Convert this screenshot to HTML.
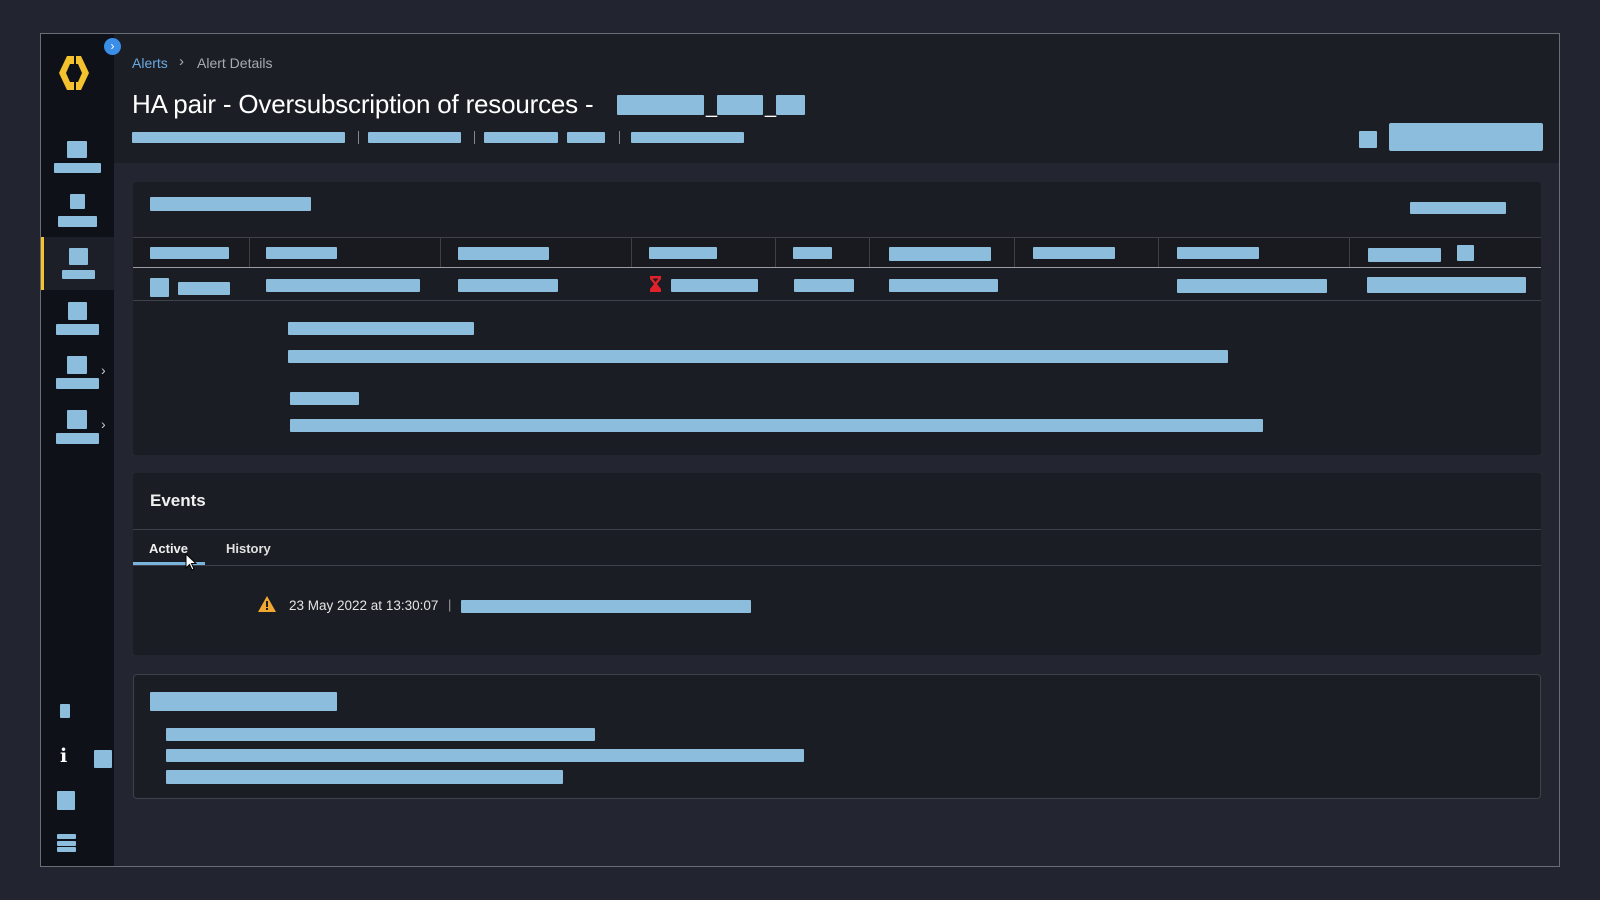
<!DOCTYPE html>
<html><head><meta charset="utf-8"><style>
*{margin:0;padding:0;box-sizing:border-box}
body{width:1600px;height:900px;background:#22252f;font-family:"Liberation Sans",sans-serif;position:relative;overflow:hidden;color:#e8eaee}
.a{position:absolute}
.b{position:absolute;background:#8cbddd;border-radius:1px}
.frame{left:40px;top:33px;width:1520px;height:834px;border:1px solid #6a6d75;background:#232631}
.side{left:41px;top:34px;width:73px;height:832px;background:#0e1218}
.hdr{left:114px;top:34px;width:1445px;height:129px;background:#1b1e25}
.card{background:#1b1d24;border-radius:3px}
.vl{position:absolute;width:1px;background:#3d4048}
.hl{position:absolute;height:1px;background:#3d4048}
</style></head><body>
<div class="a frame"></div>
<div class="a side"></div>
<div class="a" style="left:41px;top:237px;width:73px;height:53px;background:#1c1f27"></div>
<div class="a" style="left:41px;top:237px;width:3px;height:53px;background:#f3c22e"></div>
<div class="a hdr"></div>
<!-- logo -->
<svg class="a" style="left:58px;top:55px" width="32" height="36" viewBox="0 0 32 36"><path d="M9 1 L16 1 L16 9 L12 9 L8 18 L12 27 L16 27 L16 35 L9 35 L1 18 Z" fill="#f3c22e"/><path d="M18 1 L23 1 L31 18 L23 35 L18 35 L18 27 L20 27 L24 18 L20 9 L18 9 Z" fill="#f3c22e"/></svg>
<div class="a" style="left:104px;top:38px;width:17px;height:17px;border-radius:50%;background:#3a8ee8;color:#fff;font-size:12px;line-height:16px;text-align:center">›</div>
<!-- sidebar icons -->
<div class="b" style="left:67px;top:141px;width:20px;height:17px"></div><div class="b" style="left:54px;top:163px;width:47px;height:10px"></div>
<div class="b" style="left:70px;top:194px;width:15px;height:15px"></div><div class="b" style="left:58px;top:216px;width:39px;height:11px"></div>
<div class="b" style="left:69px;top:248px;width:19px;height:17px"></div><div class="b" style="left:62px;top:270px;width:33px;height:9px"></div>
<div class="b" style="left:68px;top:302px;width:19px;height:18px"></div><div class="b" style="left:56px;top:324px;width:43px;height:11px"></div>
<div class="b" style="left:67px;top:356px;width:20px;height:18px"></div><div class="b" style="left:56px;top:378px;width:43px;height:11px"></div>
<div class="a" style="left:101px;top:362px;font-size:14px;color:#ccc">›</div>
<div class="b" style="left:67px;top:410px;width:20px;height:19px"></div><div class="b" style="left:56px;top:433px;width:43px;height:11px"></div>
<div class="a" style="left:101px;top:416px;font-size:14px;color:#ccc">›</div>
<div class="b" style="left:60px;top:704px;width:10px;height:14px"></div>
<div class="a" style="left:60px;top:745px;font-size:19px;font-weight:bold;color:#fff;font-family:'DejaVu Serif',serif">i</div>
<div class="b" style="left:94px;top:750px;width:18px;height:18px"></div>
<div class="b" style="left:57px;top:791px;width:18px;height:19px"></div>
<div class="b" style="left:57px;top:834px;width:19px;height:5px"></div><div class="b" style="left:57px;top:841px;width:19px;height:5px"></div><div class="b" style="left:57px;top:847px;width:19px;height:5px"></div>
<!-- header -->
<div class="a" style="left:132px;top:55px;font-size:14px;color:#6aa9e0">Alerts</div>
<div class="a" style="left:179px;top:53px;font-size:15px;color:#aaa">›</div>
<div class="a" style="left:197px;top:55px;font-size:14px;color:#a8abb2">Alert Details</div>
<div class="a" style="left:132px;top:89px;font-size:26px;color:#fff;letter-spacing:-0.2px">HA pair - Oversubscription of resources -</div>
<div class="b" style="left:617px;top:95px;width:87px;height:20px"></div>
<div class="a" style="left:706px;top:96px;font-size:20px;color:#fff">_</div>
<div class="b" style="left:717px;top:95px;width:46px;height:20px"></div>
<div class="a" style="left:765px;top:96px;font-size:20px;color:#fff">_</div>
<div class="b" style="left:776px;top:95px;width:29px;height:20px"></div>
<div class="b" style="left:132px;top:132px;width:213px;height:11px"></div>
<div class="b" style="left:368px;top:132px;width:93px;height:11px"></div>
<div class="b" style="left:484px;top:132px;width:74px;height:11px"></div>
<div class="b" style="left:567px;top:132px;width:38px;height:11px"></div>
<div class="b" style="left:631px;top:132px;width:113px;height:11px"></div>
<div class="vl" style="left:358px;top:131px;height:13px;background:#888"></div>
<div class="vl" style="left:474px;top:131px;height:13px;background:#888"></div>
<div class="vl" style="left:619px;top:131px;height:13px;background:#888"></div>
<div class="b" style="left:1359px;top:131px;width:18px;height:17px"></div>
<div class="b" style="left:1389px;top:123px;width:154px;height:28px;border-radius:2px"></div>
<!-- card 1 -->
<div class="a card" style="left:133px;top:182px;width:1408px;height:273px"></div>
<div class="b" style="left:150px;top:197px;width:161px;height:14px"></div>
<div class="b" style="left:1410px;top:202px;width:96px;height:12px"></div>
<div class="hl" style="left:133px;top:237px;width:1408px;background:#3f424a"></div>
<div class="a" style="left:133px;top:238px;width:1408px;height:29px;background:#181a20"></div>
<div class="hl" style="left:133px;top:267px;width:1408px;background:#9a9ca2"></div>
<div class="hl" style="left:133px;top:300px;width:1408px;background:#3f424a"></div>
<div class="vl" style="left:249px;top:238px;height:29px"></div>
<div class="vl" style="left:440px;top:238px;height:29px"></div>
<div class="vl" style="left:631px;top:238px;height:29px"></div>
<div class="vl" style="left:775px;top:238px;height:29px"></div>
<div class="vl" style="left:869px;top:238px;height:29px"></div>
<div class="vl" style="left:1014px;top:238px;height:29px"></div>
<div class="vl" style="left:1158px;top:238px;height:29px"></div>
<div class="vl" style="left:1349px;top:238px;height:29px"></div>
<div class="b" style="left:150px;top:247px;width:79px;height:12px"></div>
<div class="b" style="left:266px;top:247px;width:71px;height:12px"></div>
<div class="b" style="left:458px;top:247px;width:91px;height:13px"></div>
<div class="b" style="left:649px;top:247px;width:68px;height:12px"></div>
<div class="b" style="left:793px;top:247px;width:39px;height:12px"></div>
<div class="b" style="left:889px;top:247px;width:102px;height:14px"></div>
<div class="b" style="left:1033px;top:247px;width:82px;height:12px"></div>
<div class="b" style="left:1177px;top:247px;width:82px;height:12px"></div>
<div class="b" style="left:1368px;top:248px;width:73px;height:14px"></div>
<div class="b" style="left:1457px;top:245px;width:17px;height:16px"></div>
<div class="b" style="left:150px;top:278px;width:19px;height:19px"></div>
<div class="b" style="left:178px;top:282px;width:52px;height:13px"></div>
<div class="b" style="left:266px;top:279px;width:154px;height:13px"></div>
<div class="b" style="left:458px;top:279px;width:100px;height:13px"></div>
<svg class="a" style="left:649px;top:276px" width="13" height="16" viewBox="0 0 13 16"><path d="M1 0H12V3L8 8L12 13V16H1V13L5 8L1 3Z" fill="#e0202a"/><path d="M3.5 2.5H9.5L6.5 6Z" fill="#1b1d24"/></svg>
<div class="b" style="left:671px;top:279px;width:87px;height:13px"></div>
<div class="b" style="left:794px;top:279px;width:60px;height:13px"></div>
<div class="b" style="left:889px;top:279px;width:109px;height:13px"></div>
<div class="b" style="left:1177px;top:279px;width:150px;height:14px"></div>
<div class="b" style="left:1367px;top:277px;width:159px;height:16px"></div>
<div class="b" style="left:288px;top:322px;width:186px;height:13px"></div>
<div class="b" style="left:288px;top:350px;width:940px;height:13px"></div>
<div class="b" style="left:290px;top:392px;width:69px;height:13px"></div>
<div class="b" style="left:290px;top:419px;width:973px;height:13px"></div>
<!-- events -->
<div class="a card" style="left:133px;top:473px;width:1408px;height:182px"></div>
<div class="a" style="left:150px;top:491px;font-size:17px;font-weight:bold;color:#f0f0f0">Events</div>
<div class="hl" style="left:133px;top:529px;width:1408px"></div>
<div class="a" style="left:149px;top:541px;font-size:13px;font-weight:bold;color:#f0f0f0">Active</div>
<div class="a" style="left:226px;top:541px;font-size:13px;font-weight:bold;color:#e0e0e0">History</div>
<div class="hl" style="left:133px;top:565px;width:1408px"></div>
<div class="a" style="left:133px;top:562px;width:72px;height:3px;background:#7ab4dc"></div>
<svg class="a" style="left:258px;top:596px" width="18" height="16" viewBox="0 0 18 16"><path d="M9 0L18 16H0Z" fill="#f0a830"/><rect x="8" y="5" width="2" height="6" fill="#1b1d24"/><rect x="8" y="12" width="2" height="2" fill="#1b1d24"/></svg>
<div class="a" style="left:289px;top:598px;font-size:13.5px;color:#e4e4e4">23 May 2022 at 13:30:07</div>
<div class="a" style="left:448px;top:597px;font-size:13px;color:#999">|</div>
<div class="b" style="left:461px;top:600px;width:290px;height:13px"></div>
<!-- card 3 -->
<div class="a card" style="left:133px;top:674px;width:1408px;height:125px;border:1px solid #3e4149;border-radius:4px"></div>
<div class="b" style="left:150px;top:692px;width:187px;height:19px"></div>
<div class="b" style="left:166px;top:728px;width:429px;height:13px"></div>
<div class="b" style="left:166px;top:749px;width:638px;height:13px"></div>
<div class="b" style="left:166px;top:770px;width:397px;height:14px"></div>
<!-- cursor -->
<svg class="a" style="left:185px;top:553px" width="12" height="18" viewBox="0 0 12 18"><path d="M1 1V15L4.5 11.5L7 17L9 16L6.5 10.5H11Z" fill="#fff" stroke="#000" stroke-width="1"/></svg>
</body></html>
